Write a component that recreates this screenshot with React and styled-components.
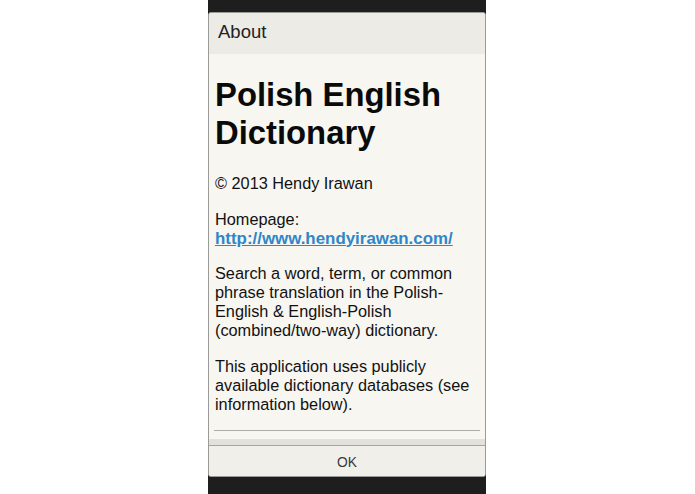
import React from "react";
import styled, { createGlobalStyle } from "styled-components";

const Global = createGlobalStyle`
  html, body { margin: 0; padding: 0; background: #ffffff; }
  body { font-family: "Liberation Sans", Arial, sans-serif; }
`;

const Screen = styled.div`
  width: 278px;
  height: 494px;
  margin-left: 208px;
  background: #1e1e1e;
  padding: 12px 0 17px;
  box-sizing: border-box;
  display: flex;
  flex-direction: column;
`;

const Dialog = styled.div`
  flex: 1;
  display: flex;
  flex-direction: column;
  border: 1px solid #9a9a98;
  border-radius: 3px;
  overflow: hidden;
  background: #f8f6f1;
`;

const Header = styled.div`
  height: 41px;
  box-sizing: border-box;
  flex: none;
  display: flex;
  align-items: center;
  padding: 0 0 3px 9px;
  background: #ecebe6;
  color: #222;
  font-size: 18.5px;
`;

const Body = styled.div`
  flex: 1;
  display: flex;
  flex-direction: column;
  overflow: hidden;
`;

const Content = styled.div`
  padding: 0 6px;
  color: #111;
  font-size: 16.3px;
`;

const Title = styled.h1`
  font-size: 32.8px;
  font-weight: bold;
  margin: 22px 0;
  line-height: 38px;
  color: #0a0a0a;
`;

const Para = styled.p`
  margin: 16.5px 0;
  line-height: 19px;
`;

const Link = styled.a`
  color: #2f86c8;
  font-weight: bold;
  font-size: 16.9px;
  text-decoration: underline;
`;

const Rule = styled.hr`
  margin: 0 5px;
  border: none;
  border-top: 1px solid #aeaca8;
  height: 0;
`;

const ButtonBar = styled.div`
  flex: none;
  background: #e3e1dc;
  padding-top: 6px;
`;

const OkButton = styled.button`
  display: block;
  width: 100%;
  height: 31px;
  border: none;
  border-top: 1px solid #a8a6a2;
  background: #f1efea;
  color: #3a3a3a;
  font-family: "Liberation Sans", Arial, sans-serif;
  font-size: 13.8px;
  padding: 3px 0 0;
`;

export default function App() {
  return (
    <>
      <Global />
      <Screen>
        <Dialog>
          <Header>About</Header>
          <Body>
            <Content>
              <Title>Polish English Dictionary</Title>
              <Para>© 2013 Hendy Irawan</Para>
              <Para>
                Homepage:
                <br />
                <Link href="#">http://www.hendyirawan.com/</Link>
              </Para>
              <Para>
                Search a word, term, or common phrase translation in the
                Polish-English &amp; English-Polish (combined/two-way)
                dictionary.
              </Para>
              <Para>
                This application uses publicly available dictionary databases
                (see information below).
              </Para>
            </Content>
            <Rule />
          </Body>
          <ButtonBar>
            <OkButton>OK</OkButton>
          </ButtonBar>
        </Dialog>
      </Screen>
    </>
  );
}
